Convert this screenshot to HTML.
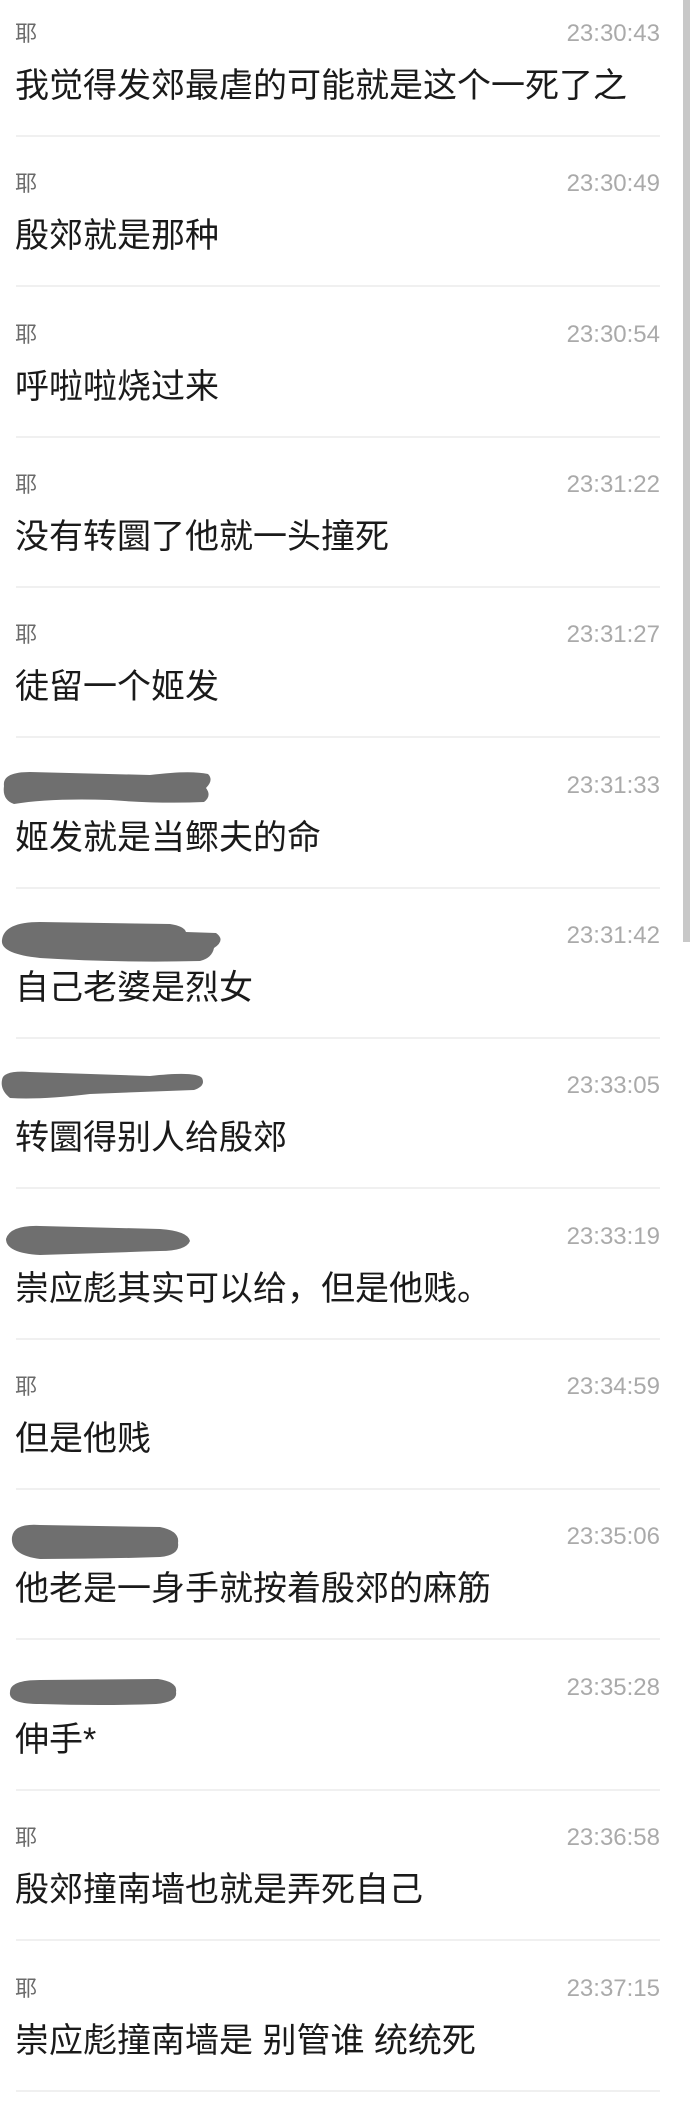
<!DOCTYPE html>
<html><head><meta charset="utf-8"><style>
html,body{margin:0;padding:0;background:#fff;width:690px;height:2114px;overflow:hidden;position:relative;font-family:"Liberation Sans","Noto Sans CJK SC",sans-serif}
.row{position:absolute;left:0;width:690px;height:150px}
.name{position:absolute;left:15px;top:19px;font-size:22px;color:#6a6a6a;line-height:30px}
.time{position:absolute;right:30px;top:19px;font-size:24px;color:#aaa;line-height:30px;letter-spacing:0px}
.msg{position:absolute;left:15px;top:63px;font-size:34px;color:#1a1a1a;line-height:46px;letter-spacing:0px;white-space:nowrap}
.sep{position:absolute;left:16px;width:644px;top:135px;height:2px;background:#f0f0f0}
.blob{position:absolute;left:0;top:14px}
.sb{position:absolute;right:0;top:0;width:7px;height:942px;background:#c8c8c8}
</style></head><body>
<div class="sb"></div>

<div class="row" style="top:0px"><div class="name">耶</div><div class="time">23:30:43</div><div class="msg">我觉得发郊最虐的可能就是这个一死了之</div><div class="sep"></div></div>
<div class="row" style="top:150px"><div class="name">耶</div><div class="time">23:30:49</div><div class="msg">殷郊就是那种</div><div class="sep"></div></div>
<div class="row" style="top:301px"><div class="name">耶</div><div class="time">23:30:54</div><div class="msg">呼啦啦烧过来</div><div class="sep"></div></div>
<div class="row" style="top:451px"><div class="name">耶</div><div class="time">23:31:22</div><div class="msg">没有转圜了他就一头撞死</div><div class="sep"></div></div>
<div class="row" style="top:601px"><div class="name">耶</div><div class="time">23:31:27</div><div class="msg">徒留一个姬发</div><div class="sep"></div></div>
<div class="row" style="top:752px">
<svg class="blob" width="230" height="48"><path d="M4 20 Q2 6 30 6 L150 9 Q190 4 208 8 Q214 14 206 22 Q212 30 204 36 Q160 38 110 34 Q50 32 14 38 Q2 34 4 20Z" fill="#6f6f6f"/></svg>
<div class="time">23:31:33</div><div class="msg">姬发就是当鳏夫的命</div><div class="sep"></div></div>
<div class="row" style="top:902px">
<svg class="blob" width="240" height="52"><path d="M2 24 Q4 6 40 6 L170 8 Q184 10 186 16 L216 17 Q226 24 214 32 Q212 42 200 45 Q120 47 40 42 Q0 38 2 24Z" fill="#6f6f6f"/></svg>
<div class="time">23:31:42</div><div class="msg">自己老婆是烈女</div><div class="sep"></div></div>
<div class="row" style="top:1052px">
<svg class="blob" width="220" height="44"><path d="M2 14 Q3 4 30 6 L150 10 Q196 5 202 12 Q206 20 194 24 Q140 26 90 28 Q40 34 10 32 Q0 24 2 14Z" fill="#6f6f6f"/></svg>
<div class="time">23:33:05</div><div class="msg">转圜得别人给殷郊</div><div class="sep"></div></div>
<div class="row" style="top:1203px">
<svg class="blob" width="210" height="48"><path d="M6 22 Q10 8 40 9 L160 12 Q188 14 190 24 Q186 34 160 34 Q100 36 40 38 Q6 36 6 22Z" fill="#6f6f6f"/></svg>
<div class="time">23:33:19</div><div class="msg">崇应彪其实可以给，但是他贱。</div><div class="sep"></div></div>
<div class="row" style="top:1353px"><div class="name">耶</div><div class="time">23:34:59</div><div class="msg">但是他贱</div><div class="sep"></div></div>
<div class="row" style="top:1503px">
<svg class="blob" width="200" height="52"><path d="M12 20 Q14 6 40 8 L160 10 Q180 14 178 26 Q180 38 160 40 Q100 42 40 42 Q10 38 12 20Z" fill="#6f6f6f"/></svg>
<div class="time">23:35:06</div><div class="msg">他老是一身手就按着殷郊的麻筋</div><div class="sep"></div></div>
<div class="row" style="top:1654px">
<svg class="blob" width="200" height="48"><path d="M10 24 Q10 12 40 12 L158 11 Q178 14 176 24 Q178 34 156 36 Q100 38 40 36 Q8 36 10 24Z" fill="#6f6f6f"/></svg>
<div class="time">23:35:28</div><div class="msg">伸手*</div><div class="sep"></div></div>
<div class="row" style="top:1804px"><div class="name">耶</div><div class="time">23:36:58</div><div class="msg">殷郊撞南墙也就是弄死自己</div><div class="sep"></div></div>
<div class="row" style="top:1955px"><div class="name">耶</div><div class="time">23:37:15</div><div class="msg">崇应彪撞南墙是 别管谁 统统死</div><div class="sep"></div></div>
</body></html>
